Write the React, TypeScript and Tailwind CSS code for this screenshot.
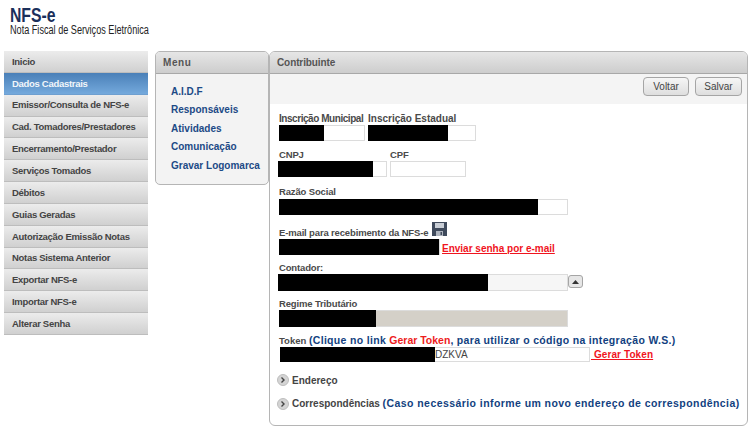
import React from "react";

const items = ["Inicio","Dados Cadastrais","Emissor/Consulta de NFS-e","Cad. Tomadores/Prestadores","Encerramento/Prestador","Serviços Tomados","Débitos","Guias Geradas","Autorização Emissão Notas","Notas Sistema Anterior","Exportar NFS-e","Importar NFS-e","Alterar Senha"];
const menu = ["A.I.D.F","Responsáveis","Atividades","Comunicação","Gravar Logomarca"];

function Box({ w, black, bg = "bg-white", h = "h-[16px]", ml = "", children }: { w: string; black: string; bg?: string; h?: string; ml?: string; children?: React.ReactNode }) {
  return (
    <div className={`${w} ${h} ${bg} ${ml} flex shrink-0 border border-[#dcdcdc]`}>
      <div className={`${black} -my-px -ml-px bg-black`} />
      {children}
    </div>
  );
}

function Label({ children, className = "text-[9.5px] tracking-[-0.15px]" }: { children: React.ReactNode; className?: string }) {
  return <div className={`h-[12px] leading-[12px] text-[#4a4a4a] font-bold whitespace-nowrap ${className}`}>{children}</div>;
}

function Chevron() {
  return (
    <svg width="12" height="12" viewBox="0 0 12 12" className="shrink-0">
      <circle cx="6" cy="6" r="5.5" fill="#d4d4d4" stroke="#bdbdbd" />
      <path d="M4.5 3.5 7 6 4.5 8.5" fill="none" stroke="#444" strokeWidth="1.4" />
    </svg>
  );
}

export default function App() {
  return (
    <div className="w-[750px] h-[429px] bg-white overflow-hidden font-['Liberation_Sans',sans-serif]">
      <div className="h-[51px] pl-[10px] pt-[5px]">
        <div className="h-[19px] text-[21px] leading-[19px] font-bold text-[#1b2f5b] origin-left scale-x-[0.75] whitespace-nowrap">NFS-e</div>
        <div className="h-[13px] text-[12px] leading-[13px] text-[#222] origin-left scale-x-[0.76] whitespace-nowrap">Nota Fiscal de Serviços Eletrônica</div>
      </div>
      <div className="flex items-start">
        <div className="ml-[4px] w-[144px] shrink-0">
          {items.map((t, i) => (
            <div key={t} className={`h-[21.85px] pl-[8px] pt-[1px] flex items-center whitespace-nowrap text-[9.5px] tracking-[-0.3px] font-bold border-b ${i === 1 ? "bg-gradient-to-b from-[#4a80b8] to-[#74a9dc] text-[#f2f6fa] border-[#6e9fd0]" : "bg-gradient-to-b from-[#ececec] to-[#d0d0d0] text-[#444] border-[#bdbdbd]"}`}>{t}</div>
          ))}
        </div>
        <div className="ml-[7px] w-[114px] h-[134px] shrink-0 rounded-[5px] border border-[#b5b5b5] bg-[#f3f3f3] overflow-hidden">
          <div className="h-[22px] pl-[7px] flex items-center bg-gradient-to-b from-[#e6e6e6] to-[#cdcdcd] border-b border-[#a8a8a8] text-[10px] font-bold text-[#555] tracking-[0.6px]">Menu</div>
          <div className="pl-[15px] pt-[8px] flex flex-col">
            {menu.map((t) => (
              <div key={t} className="h-[18.5px] flex items-center text-[10px] font-bold text-[#1c4a86]">{t}</div>
            ))}
          </div>
        </div>
        <div className="w-[479px] h-[375px] shrink-0 rounded-[6px] border border-[#b5b5b5] bg-white overflow-hidden">
          <div className="h-[22px] pl-[7px] flex items-center bg-gradient-to-b from-[#e6e6e6] to-[#cdcdcd] border-b border-[#a8a8a8] text-[10px] font-bold text-[#555] tracking-[-0.1px]">Contribuinte</div>
          <div className="h-[30px] bg-[#f4f4f4] flex items-start justify-end gap-[6px] pr-[5px] pt-[3px]">
            <div className="w-[46px] h-[19px] rounded-[4px] border border-[#a5a5a5] bg-gradient-to-b from-[#f6f6f6] to-[#dedede] flex items-center justify-center text-[10px] text-[#444]">Voltar</div>
            <div className="w-[47px] h-[19px] rounded-[4px] border border-[#a5a5a5] bg-gradient-to-b from-[#f6f6f6] to-[#dedede] flex items-center justify-center text-[10px] text-[#444]">Salvar</div>
          </div>
          <div className="pl-[9px]">
            <div className="mt-[9px] flex gap-[3px]">
              <div className="w-[86px]"><Label className="text-[10px] tracking-[-0.45px]">Inscrição Municipal</Label><Box w="w-[86px]" black="w-[45px]" /></div>
              <div className="w-[108px]"><Label className="text-[10px]">Inscrição Estadual</Label><Box w="w-[108px]" black="w-[80px]" /></div>
            </div>
            <div className="mt-[8px] flex">
              <div className="w-[111px]"><Label>CNPJ</Label><Box w="w-[109px]" black="w-[95px]" ml="-ml-[1px]" /></div>
              <div><Label>CPF</Label><Box w="w-[76px]" black="w-0" ml="border-[#c4c4c4]" /></div>
            </div>
            <div className="mt-[9px]"><Label>Razão Social</Label><div className="h-[1px]" /><Box w="w-[289px]" black="w-[259px]" /></div>
            <div className="mt-[6px] flex items-end h-[18px]">
              <Label className="text-[9.5px] tracking-[-0.15px] w-[153px]">E-mail para recebimento da NFS-e</Label>
              <svg width="15" height="14" viewBox="0 0 15 14" className="mb-[3px]">
                <path d="M0 0H15V14H0Z" fill="#3f4a5c" />
                <path d="M3 1H12V6H3Z" fill="#c9ced6" />
                <path d="M4 9H11V14H4Z" fill="#aeb4be" />
                <path d="M8.5 10H10V13H8.5Z" fill="#3f4a5c" />
              </svg>
            </div>
            <div className="flex items-end">
              <Box w="w-[161px]" black="w-[162px]" />
              <span className="ml-[2px] text-[10px] leading-[12px] font-bold text-[#f0141e] underline">Enviar senha por e-mail</span>
            </div>
            <div className="mt-[7px]"><Label>Contador:</Label></div>
            <div className="flex items-start">
              <Box w="w-[290px]" h="h-[17px]" black="w-[210px]" bg="bg-[#f6f6f6]" ml="-ml-[1px]" />
              <div className="w-[15px] h-[13px] mt-[1px] rounded-[3px] border border-[#a5a5a5] bg-[#e6e6e6] flex items-center justify-center">
                <svg width="7" height="4" viewBox="0 0 7 4"><path d="M3.5 0 7 4H0Z" fill="#333" /></svg>
              </div>
            </div>
            <div className="mt-[7px]"><Label>Regime Tributário</Label></div>
            <Box w="w-[289px]" h="h-[17px]" black="w-[97px]" bg="bg-[#d4d0c8]" />
            <div className="mt-[6px] h-[14px] text-[9.5px] leading-[14px] font-bold text-[#4a4a4a] whitespace-nowrap">Token <span className="text-[#123f80] text-[10.5px] font-bold tracking-[0.32px]">(Clique no link <span className="text-[#ee1c1c] font-bold tracking-normal">Gerar Token</span>, para utilizar o código na integração W.S.)</span></div>
            <div className="flex items-center ml-[1px]">
              <Box w="w-[310px]" h="h-[15px]" black="w-[155px]"><span className="text-[10px] leading-[13px] text-[#444]">DZKVA</span></Box>
              <span className="ml-[1px] text-[10px] font-bold text-[#f0141e] underline tracking-[0.1px]">{"\u00a0Gerar Token"}</span>
            </div>
            <div className="mt-[11px] -ml-[2px] flex items-center gap-[3px] h-[14px]"><Chevron /><span className="text-[10px] font-bold text-[#444]">Endereço</span></div>
            <div className="mt-[10px] -ml-[2px] flex items-center gap-[3px] h-[14px] whitespace-nowrap"><Chevron /><span className="text-[10px] font-bold text-[#444]">Correspondências <span className="text-[#123f80] text-[10.5px] tracking-[0.43px]">(Caso necessário informe um novo endereço de correspondência)</span></span></div>
          </div>
        </div>
      </div>
    </div>
  );
}
